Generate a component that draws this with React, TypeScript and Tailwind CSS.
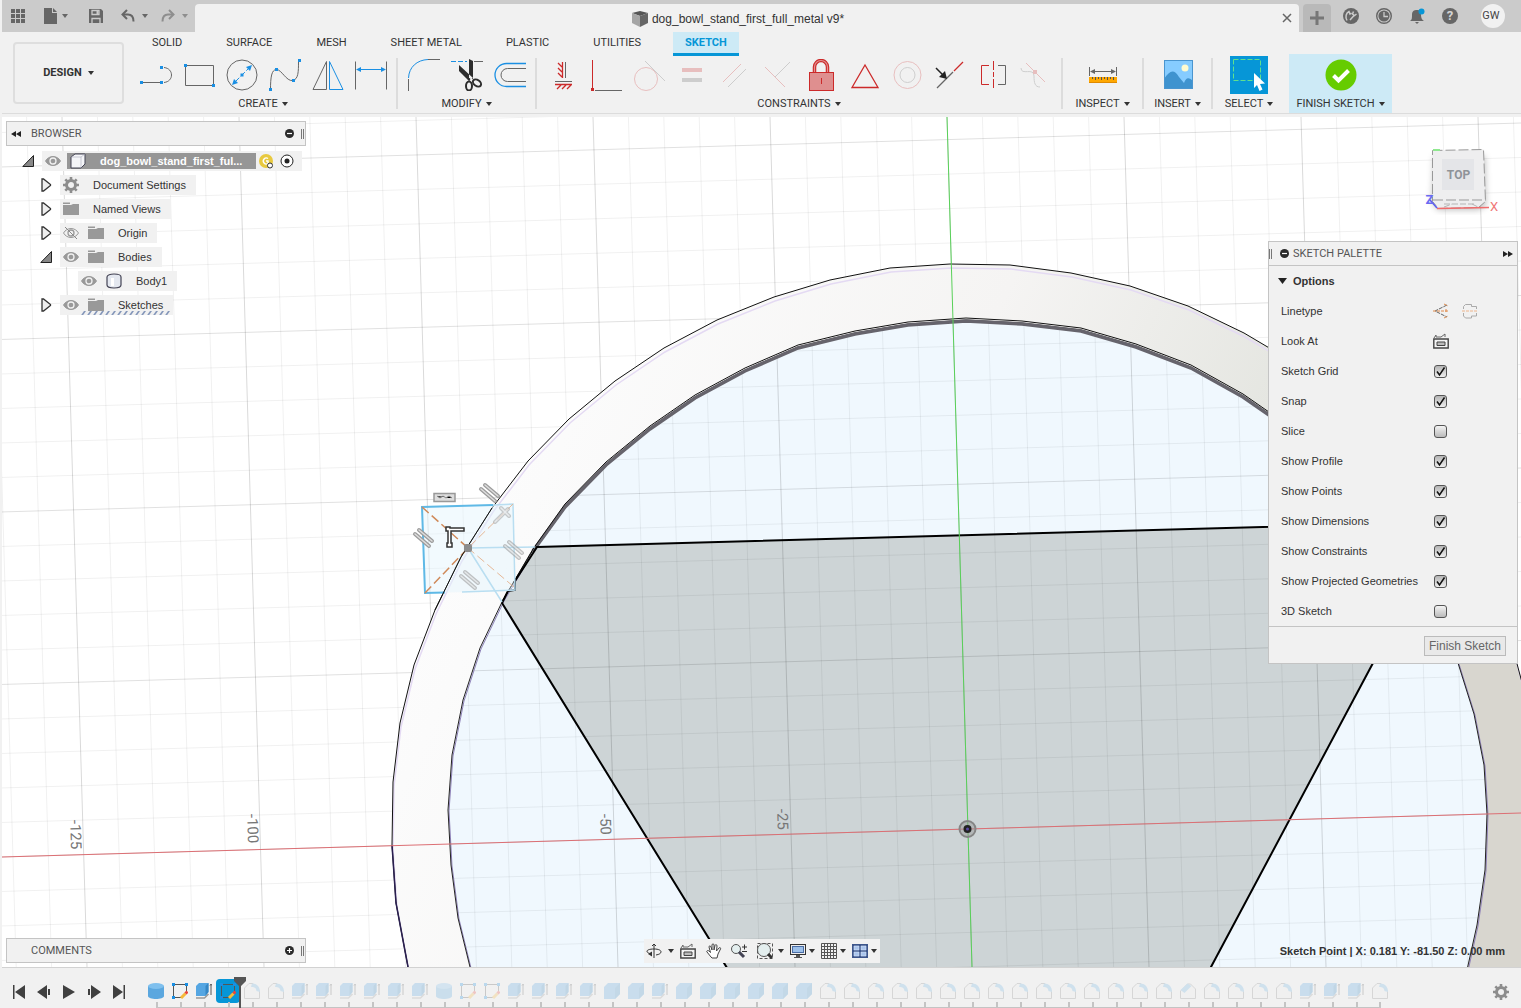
import React, { useState } from "react";

type Kids = { children?: React.ReactNode };

const GRAY = "#666666";
const BLUE = "#1a8fe3";
const RED = "#cc2a2a";

function Icon({ children, size = "w-8 h-8", box = "0 0 32 32" }: Kids & { size?: string; box?: string }) {
  return (
    <svg className={`${size} shrink-0`} viewBox={box} fill="none" aria-hidden="true">
      {children}
    </svg>
  );
}

function Caret({ color = "text-[#333]" }: { color?: string }) {
  return (
    <svg className={`h-1 w-1.5 shrink-0 ${color}`} viewBox="0 0 6 4" aria-hidden="true">
      <path d="M0 0h6L3 4z" fill="currentColor" />
    </svg>
  );
}

function Dot({ x, y }: { x: number; y: number }) {
  return <rect x={x - 1.5} y={y - 1.5} width="3" height="3" fill={BLUE} />;
}

/* ---------- ribbon icons ---------- */

const createIcons: [string, React.ReactNode][] = [
  ["Line", <><path d="M2 23.500H22M24 23.500c10-1 10-14 0-15" stroke={GRAY} /><Dot x={1.5} y={23.5} /><Dot x={21.5} y={23.5} /><Dot x={21.5} y={8.5} /></>],
  ["Rectangle", <><path d="M2.500 6.500h28v20h-28z" stroke={GRAY} /><Dot x={2.5} y={6.5} /><Dot x={30.5} y={26.5} /></>],
  ["Circle", <><circle cx="16" cy="16" r="15" stroke={GRAY} /><path d="M9 23l14-14" stroke={BLUE} strokeDasharray="6 2" /><path d="M26 6l-2 6-4-4zM6 26l2-6 4 4z" fill={BLUE} /><Dot x={16} y={16} /></>],
  ["Spline", <><path d="M1.500 30.500c0-12 1-20 6-20s10 12 16 11c6-1 6-9 6-19" stroke={GRAY} /><Dot x={1.5} y={30.5} /><Dot x={7.5} y={10.5} /><Dot x={24.5} y={21.5} /><Dot x={30.5} y={1.5} /></>],
  ["Mirror", <><path d="M14.500 2.500v28H1z" stroke={GRAY} /><path d="M17.500 2.500v28H31z" stroke={BLUE} /></>],
  ["Sketch Dimension", <><path d="M.5 2.500v28M31.500 2.500v28" stroke={GRAY} /><path d="M3 10.500h26" stroke={BLUE} /><path d="M1 10.500l5-2.500v5zM31 10.500l-5-2.500v5z" fill={BLUE} /></>],
];

const modifyIcons: [string, React.ReactNode][] = [
  ["Fillet", <><path d="M.5 19C1 8 9 1 20 .5" stroke={BLUE} /><path d="M20 .5h12M.5 20v12" stroke={GRAY} /></>],
  ["Trim", <><path d="M0 2.500h16" stroke={BLUE} strokeDasharray="5 2" /><path d="M23 2.500h9" stroke={GRAY} /><path d="M8 6v6l10 10 4-3zM18 0l4 2v18l-4-1z" fill="#2d2d2d" /><ellipse cx="18" cy="27" rx="3" ry="4.500" stroke="#2d2d2d" strokeWidth="2" /><ellipse cx="26" cy="24" rx="4.500" ry="3" transform="rotate(35 26 24)" stroke="#2d2d2d" strokeWidth="2" /><circle cx="20" cy="20" r="1" fill="#fff" /></>],
  ["Offset", <><path d="M32 4.500H12.500a11.500 11.500 0 000 23H32" stroke={BLUE} strokeWidth="1.300" /><path d="M32 9.500H13.500a6.500 6.500 0 000 13H32" stroke={GRAY} /></>],
];

const constraintIcons: [string, React.ReactNode, boolean][] = [
  ["Horizontal/Vertical", <><path d="M15.500 3v16M8 25.500h17M11 4l4 4M11 9l4 4M11 14l4 4M14 26l-4 4M19 26l-4 4M24 26l-4 4" stroke={RED} strokeWidth="1.300" /><path d="M18.500 3v16M8 22.500h17" stroke={GRAY} /></>, true],
  ["Coincident", <><path d="M2.500 1v28" stroke={RED} /><path d="M5 31.500h27" stroke={GRAY} /><rect x="1" y="29" width="3" height="3" fill={RED} /></>, true],
  ["Tangent", <><circle cx="13" cy="20" r="11.500" stroke={RED} /><path d="M12 2l20 20" stroke={GRAY} /></>, false],
  ["Equal", <><path d="M6 11h20" stroke={RED} strokeWidth="4" /><path d="M6 21h20" stroke={GRAY} strokeWidth="4" /></>, false],
  ["Parallel", <><path d="M4 23L22 5" stroke={RED} /><path d="M9 28l18-18" stroke={GRAY} /></>, false],
  ["Perpendicular", <><path d="M3 8l20 20" stroke={RED} /><path d="M13 18L28 3" stroke={GRAY} /></>, false],
  ["Fix/Unfix", <><path d="M9.500 14V8a6.500 6.500 0 0113 0v6" stroke={RED} strokeWidth="3.500" /><path d="M9.500 14V8a6.500 6.500 0 0113 0v6" stroke="#e29292" strokeWidth="1.200" /><rect x="4.500" y="13.500" width="24" height="18" fill="#df8f8f" stroke={RED} /><path d="M16.500 19v6" stroke={RED} /></>, true],
  ["MidPoint", <path d="M17 6L30 28.500H4z" stroke={RED} strokeWidth="1.300" />, true],
  ["Concentric", <><circle cx="16.500" cy="16" r="13.500" stroke={RED} /><circle cx="16.500" cy="16" r="7.500" stroke={GRAY} /></>, false],
  ["Collinear", <><path d="M3 29l16-16" stroke={GRAY} strokeWidth="1.300" /><path d="M20 12l9-9" stroke={RED} strokeWidth="1.300" /><path d="M2 9l7 7" stroke="#222" strokeWidth="1.500" /><path d="M13 20l-2-8-6 6z" fill="#222" /></>, true],
  ["Symmetry", <><path d="M12 6.500H4.500v19H12M16.500 2v9M16.500 13v5M16.500 20v9" stroke={RED} /><path d="M21 6.500h7.500v19H21" stroke={GRAY} /></>, true],
  ["Curvature", <><path d="M6 4l19 19" stroke={RED} /><path d="M1 9c0 8 13-1 13 8 0 7 1 11 6 11" stroke={GRAY} /><rect x="13" y="11" width="4" height="4" fill={RED} /></>, false],
];

function ToolLabel({ text }: { text: string }) {
  return (
    <button className="mt-[3px] flex h-4 items-center justify-center gap-1 whitespace-nowrap">
      {text}
      <Caret />
    </button>
  );
}

function Group({ label, children }: Kids & { label: string }) {
  return (
    <section className="flex flex-col items-center pt-px">
      <div className="flex h-9 items-center">{children}</div>
      <ToolLabel text={label} />
    </section>
  );
}

function Tool({ name, faded, children }: Kids & { name: string; faded?: boolean }) {
  return (
    <button aria-label={name} className={`flex w-[43px] justify-center ${faded ? "opacity-25" : ""}`}>
      <Icon>{children}</Icon>
    </button>
  );
}

function Divider() {
  return <div className="mx-1 mt-0.5 mb-1 w-0.5 shrink-0 bg-[#dcdcdc]" />;
}

function Ribbon() {
  const tabs = ["SOLID", "SURFACE", "MESH", "SHEET METAL", "PLASTIC", "UTILITIES", "SKETCH"];
  return (
    <div className="flex border-b border-[#dcdcdc] bg-[#f1f1f1] text-[11px] text-[#333]">
      <div className="ml-[11px] w-[121px] shrink-0 pt-2.5 pb-[9px]">
        <button className="flex h-[62px] w-[111px] items-center justify-center gap-1.5 rounded border-2 border-[#dedede] font-bold">
          DESIGN
          <Caret />
        </button>
      </div>
      <div className="flex flex-col">
        <nav className="ml-1.5 flex h-6 gap-5">
          {tabs.map((t) => (
            <button
              key={t}
              className={
                t === "SKETCH"
                  ? "border-b-[3px] border-[#0696d7] bg-[#cdeaf6] px-3 pt-0.5 font-bold whitespace-nowrap text-[#0696d7]"
                  : "border-b-[3px] border-transparent px-3 pt-0.5 whitespace-nowrap"
              }
            >
              {t}
            </button>
          ))}
        </nav>
        <div className="flex h-[57px]">
          <Group label="CREATE">
            {createIcons.map(([n, art]) => <Tool key={n} name={n}>{art}</Tool>)}
          </Group>
          <Divider />
          <Group label="MODIFY">
            {modifyIcons.map(([n, art]) => <Tool key={n} name={n}>{art}</Tool>)}
          </Group>
          <Divider />
          <Group label="CONSTRAINTS">
            {constraintIcons.map(([n, art, on]) => <Tool key={n} name={n} faded={!on}>{art}</Tool>)}
          </Group>
          <Divider />
          <div className="w-[71px]">
            <Group label="INSPECT">
              <Icon>
                <path d="M2.500 8v9M29.500 8v9M4 12.500h24" stroke={GRAY} />
                <path d="M3 12.500l5-2.500v5zM29 12.500l-5-2.500v5z" fill={GRAY} />
                <rect x="2" y="18" width="28" height="6" fill="#ffa800" />
                <path d="M5.500 18v2M8.500 18v3M11.500 18v2M14.500 18v3M17.500 18v2M20.500 18v3M23.500 18v2M26.500 18v3" stroke="#555" />
                <path d="M2 23.500h28" stroke="#e08a00" />
              </Icon>
            </Group>
          </div>
          <Divider />
          <div className="w-[59px]">
            <Group label="INSERT">
              <Icon>
                <rect x="2" y="1" width="29" height="29" fill="#86ccff" />
                <path d="M2 20C8 11 12 10 17 18l5 6c2-6 5-6 9-2v8H2z" fill="#3f93cf" />
                <circle cx="23" cy="9" r="3.500" fill="#fffbd0" />
                <rect x="2.500" y="1.500" width="28" height="28" stroke="#4a95cf" />
              </Icon>
            </Group>
          </div>
          <Divider />
          <div className="w-16">
            <Group label="SELECT">
              <Icon size="w-[38px] h-[38px]" box="0 0 38 38">
                <path d="M0 0h38v38H0z" fill="#0696d7" />
                <path d="M3.500 3.500h27v21h-27z" stroke="#5fe08f" strokeDasharray="5 2" />
                <path d="M24 17v15l3-3 2.500 6 3-1.500-2.500-5.500 5-.500z" fill="#fff" />
              </Icon>
            </Group>
          </div>
          <div className="-mt-0.5 ml-2 w-[103px] bg-[#cdeaf6] pt-0.5">
            <Group label="FINISH SKETCH">
              <Icon>
                <circle cx="16" cy="16" r="15.500" fill="#66cc00" />
                <path d="M8.500 16.500l5 5 10-10" stroke="#fff" strokeWidth="4" />
              </Icon>
            </Group>
          </div>
        </div>
      </div>
    </div>
  );
}

/* ---------- title bar ---------- */

function TitleBar() {
  return (
    <header className="flex h-8 bg-[#cbcbcb] text-[#666]">
      <div className="flex w-[193px] items-center pl-2">
        <button aria-label="Data panel">
          <Icon size="w-4 h-4" box="0 0 16 16">
            <path d="M1 1h4v4H1zM6 1h4v4H6zM11 1h4v4h-4zM1 6h4v4H1zM6 6h4v4H6zM11 6h4v4h-4zM1 11h4v4H1zM6 11h4v4H6zM11 11h4v4h-4z" fill="#666" />
          </Icon>
        </button>
        <button aria-label="File" className="ml-4 flex items-center gap-1">
          <Icon size="w-4 h-4" box="0 0 16 16"><path d="M2 0h8v5h5v11H2zM11 0l4 4h-4z" fill="#666" /></Icon>
          <Caret color="text-[#666]" />
        </button>
        <button aria-label="Save" className="ml-5">
          <Icon size="w-4 h-4" box="0 0 16 16">
            <path d="M1 1h12l2 2v12H1z" fill="#666" />
            <path d="M4 2.500h7v4H4zM4 15v-4.500h8V15" stroke="#cbcbcb" strokeWidth="1.300" />
            <path d="M8.500 3h2v3h-2z" fill="#cbcbcb" />
          </Icon>
        </button>
        <button aria-label="Undo" className="ml-4 flex items-center gap-1.5">
          <Icon size="w-4 h-4" box="0 0 16 16"><path d="M3 6.500h5c4 0 5.500 3 5.500 7" stroke="#666" strokeWidth="2" /><path d="M7 2L2.500 6.500 7 11" stroke="#666" strokeWidth="2" /></Icon>
          <Caret color="text-[#666]" />
        </button>
        <button aria-label="Redo" className="ml-3 flex items-center gap-1.5 opacity-60">
          <Icon size="w-4 h-4" box="0 0 16 16"><path d="M13 6.500H8c-4 0-5.500 3-5.500 7" stroke="#666" strokeWidth="2" /><path d="M9 2l4.500 4.500L9 11" stroke="#666" strokeWidth="2" /></Icon>
          <Caret color="text-[#666]" />
        </button>
      </div>
      <div className="mt-1 flex flex-1 items-center rounded-t bg-[#f1f1f1] pr-1.5">
        <h1 className="flex flex-1 items-center justify-center gap-1 pt-0.5 font-['Liberation_Sans',sans-serif] text-[12px] text-[#333]">
          <Icon size="w-4 h-4" box="0 0 16 16">
            <path d="M0 2l8-2 8 2-8 3z" fill="#555" /><path d="M0 2l8 3v11l-8-4z" fill="#a5a5a5" /><path d="M16 2L8 5v11l8-4z" fill="#666" />
          </Icon>
          dog_bowl_stand_first_full_metal v9*
        </h1>
        <button aria-label="Close tab">
          <Icon size="w-3 h-3" box="0 0 12 12"><path d="M2 2l8 8M10 2l-8 8" stroke="#666" strokeWidth="1.500" /></Icon>
        </button>
      </div>
      <div className="flex w-[222px] items-center pl-1">
        <button aria-label="New tab" className="mt-1 flex h-7 w-7 items-center justify-center rounded-t bg-[#b9b9b9]">
          <Icon size="w-3.5 h-3.5" box="0 0 14 14"><path d="M7 0v14M0 7h14" stroke="#777" strokeWidth="3" /></Icon>
        </button>
        <div className="ml-3 flex items-center gap-[17px]">
          <button aria-label="Extensions">
            <Icon size="w-4 h-4" box="0 0 16 16">
              <circle cx="8" cy="8" r="8" fill="#666" />
              <path d="M4 12.500C2 9 3 5 6 3.500L7 6l1.500-1M7 12l4.500-5M10.500 3.500l-1 2.500 2 1.500 2-1.500" stroke="#cbcbcb" strokeWidth="1.500" />
            </Icon>
          </button>
          <button aria-label="Job status">
            <Icon size="w-4 h-4" box="0 0 16 16"><circle cx="8" cy="8" r="7.300" stroke="#666" strokeWidth="1.400" /><circle cx="8" cy="8" r="5.600" fill="#666" /><path d="M8 4v4.500h4" stroke="#cbcbcb" strokeWidth="1.300" /></Icon>
          </button>
          <button aria-label="Notifications">
            <Icon size="w-4 h-4" box="0 0 16 16"><path d="M1 13c2-1 2-3 2-6 0-4 2-5 5-5s4 2 4 5 1 5 3 6zM6 14h4l-2 2z" fill="#666" /><circle cx="12.500" cy="3.500" r="3" fill="#0696d7" /></Icon>
          </button>
          <button aria-label="Help" className="flex h-4 w-4 items-center justify-center rounded-full bg-[#666] text-[13px] leading-4 font-bold text-[#d4d4d4]">?</button>
        </div>
        <button className="ml-[23px] flex h-6 w-6 items-center justify-center rounded-full bg-[#f1f1f1] pr-1 text-[11px] text-[#444]">GW</button>
      </div>
    </header>
  );
}

/* ---------- canvas drawing ---------- */

const OUTER =
  "950,264 1010,265 1071,273 1130,286 1188,306 1244,333 1298,365 1347,403 1392,446 1431,494 1465,546 1493,602 1516,660 1532,720 1541,782 1544,845 1540,907 1530,970 1520,1010 420,1010 408,967 396,903 392,845 393,782 400,723 414,665 435,610 461,557 492,508 528,461 569,419 615,381 664,348 717,320 774,297 830,280 890,268";
const INNER =
  "966,320 1022,323 1081,330 1136,346 1191,367 1243,396 1292,430 1336,469 1375,513 1410,561 1439,611 1458,663 1474,714 1484,765 1487,814 1485,870 1477,925 1467,970 1457,1010 485,1010 470,967 458,918 451,865 448,810 452,755 463,700 480,648 503,600 533,550 565,506 606,464 650,428 695,397 745,370 798,347 855,333 908,324";
const BODY = "537,547 1440,522 1373,663 1211,967 1190,1010 753,1010 502,603 508,591 515,590 515,581";

/* Two short bars, the glyph that marks a parallel pair. */
function ParallelMark({ x, y, faint }: { x: number; y: number; faint?: boolean }) {
  const d = "M-8 -4L6 8M-4 -8L9 3";
  return (
    <g transform={`translate(${x} ${y})`} strokeLinecap="round" opacity={faint ? 0.6 : 1}>
      <path d={d} stroke="#9c9c9c" strokeWidth="4" />
      <path d={d} stroke="#dedede" strokeWidth="1.500" />
    </g>
  );
}

function CanvasArt() {
  const cols = Array.from({ length: 49 }, (_, i) => i - 30);
  const rows = Array.from({ length: 30 }, (_, i) => i - 23);
  return (
    <svg className="absolute inset-0 h-full w-full" viewBox="2 117 1519 850" preserveAspectRatio="xMidYMid slice" aria-hidden="true">
      <defs>
        <linearGradient id="ring" x1="0" y1="0" x2="1" y2="0.3">
          <stop offset="0" stopColor="#ffffff" />
          <stop offset="0.2" stopColor="#fbfbfb" />
          <stop offset="0.5" stopColor="#f5f4f3" />
          <stop offset="0.75" stopColor="#e5e6e1" />
          <stop offset="1" stopColor="#d8d6cf" />
        </linearGradient>
        <clipPath id="ringClip">
          <polygon points={OUTER} />
        </clipPath>
      </defs>
      <rect width="1521" height="1008" fill="#fff" />
      <polygon points={INNER} fill="#f0f8fe" />
      <polygon points={BODY} fill="#cdd4d6" />
      {cols.map((k) => (
        <path key={k} d={`M${947 + 35.4 * k} 117L${972 + 35.4 * k} 967`} stroke="#000" strokeOpacity={k % 5 === 0 ? 0.15 : 0.06} />
      ))}
      {rows.map((k) => (
        <path key={k} d={`M0 ${857 + 34.5 * k}L1521 ${813 + 34.5 * k}`} stroke="#000" strokeOpacity={k % 5 === 0 ? 0.12 : 0.06} />
      ))}
      <path d={`M${OUTER.replace(/ /g, "L")}ZM${INNER.replace(/ /g, "L")}Z`} fill="url(#ring)" fillRule="evenodd" />
      <g clipPath="url(#ringClip)">
        <polygon points={OUTER} fill="none" stroke="#e4daf3" strokeWidth="1.500" transform="translate(1 4)" />
      </g>
      <polygon points={OUTER} fill="none" stroke="#111" />
      <path d="M392 845L396 903 408 967" fill="none" stroke="#2a2050" strokeWidth="1.500" />
      <polygon points={INNER} fill="none" stroke="#8f82b8" transform="translate(1 1)" />
      <polygon points={INNER} fill="none" stroke="#222" />
      <path
        d="M533 550L565 506 606 464 650 428 695 397 745 370 798 347 855 333 908 324 966 320 1022 323 1081 330 1136 346 1191 367 1243 396 1292 430"
        stroke="#66646c"
        strokeWidth="3.500"
        fill="none"
        transform="translate(0 1)"
      />
      <path d="M503 600L533 549 565 504 606 462 650 426 695 395 745 368 798 345 855 331 908 322 966 318 1022 321 1081 328 1136 344 1191 365 1243 394 1292 428" stroke="#111" fill="none" />
      <polygon points={BODY} fill="none" stroke="#000" strokeWidth="2" />
      <path d="M2 857L1521 813" stroke="#dc6f74" />
      <path d="M947 117L972 967" stroke="#58d058" />
      <circle cx="967.500" cy="829" r="8" fill="#9a9a9a" fillOpacity="0.5" stroke="#858585" strokeWidth="2" />
      <circle cx="967.500" cy="829" r="4" fill="#222" />
      <circle cx="967.500" cy="829" r="1.500" fill="#5a49a5" />

      <polygon points="422,507 513,504 514,591 425,593" fill="#e2f3fd" fillOpacity="0.45" />
      <path d="M493 505l20-1 2 86-53 2" stroke="#b9def1" strokeWidth="1.500" fill="none" />
      <path d="M468 548l67-1M468 548l34 54" stroke="#b9def1" strokeWidth="1.500" />
      <path d="M493 505l-71 2 3 86 20-.500" stroke="#5fb9e6" strokeWidth="2" fill="none" />
      <path d="M422 507l46 41M425 593l43-45" stroke="#d08a5a" strokeWidth="1.500" strokeDasharray="9 4" />
      <path d="M513 504l-45 44M514 587l-46-39" stroke="#e6b897" strokeDasharray="9 4" />
      <path d="M435 610l26-53 31-49" stroke="#111" fill="none" />
      <rect x="464" y="544" width="8" height="8" rx="2" fill="#8c8c8c" />
      <ParallelMark x={489} y={493} />
      <ParallelMark x={423} y={538} />
      <ParallelMark x={469} y={580} faint />
      <ParallelMark x={513} y={550} faint />
      <path d="M434 501.500h21v-8h-21z" fill="#ddd" stroke="#999" strokeWidth="1.500" />
      <path d="M437 496l3 2 3-2 3 2 3-2 3 2" stroke="#888" />
      <g strokeLinecap="round" opacity="0.6">
        <path d="M495 522l13-13M501 508l8 8" stroke="#aaa" strokeWidth="4" />
        <path d="M495 522l13-13M501 508l8 8" stroke="#e4e4e4" strokeWidth="1.500" />
      </g>
      <path d="M446 527h4v1h14v3h-13v12h1v4h-5v-4h1v-12h-2z" fill="#fff" stroke="#333" strokeWidth="1.500" />
      <g fill="#777" fontFamily="Roboto, sans-serif" fontSize="15">
        <text transform="translate(70 820) rotate(88)">-125</text>
        <text transform="translate(247 814) rotate(88)">-100</text>
        <text transform="translate(600 814) rotate(88)">-50</text>
        <text transform="translate(777 809) rotate(88)">-25</text>
      </g>
    </svg>
  );
}

function ViewCube() {
  return (
    <svg className="absolute top-7 right-[21px] h-[70px] w-[76px]" viewBox="1424 145 76 70" role="img" aria-label="View cube">
      <defs>
        <filter id="soft" x="-30%" y="-30%" width="160%" height="160%">
          <feGaussianBlur stdDeviation="3" />
        </filter>
      </defs>
      <path d="M1434 156h51l1 50-8 4h-40l-6-8z" fill="#000" fillOpacity="0.25" filter="url(#soft)" />
      <path d="M1432.500 150.500l51-1 2 52-7 6-40 1-6-7z" fill="#eeeeef" />
      <path d="M1432.500 150.500l51-1 2 52-7 6-40 1-6-7zM1433 200h53" fill="none" stroke="#999" strokeDasharray="10 3" />
      <path d="M1442 159h32v31h-32z" fill="#e4e5e8" />
      <path d="M1444 204h32M1444 207l8-3M1472 204l6 3" fill="none" stroke="#b5b5b5" strokeDasharray="6 2" />
      <path d="M1437 208.500l52-1" stroke="#f06c6c" strokeWidth="1.500" />
      <path d="M1437 208l-7-8" stroke="#5a5af0" strokeWidth="1.500" />
      <path d="M1433 150h7" stroke="#8fe88f" strokeWidth="2" />
      <g fontFamily="Roboto, sans-serif" fontWeight="bold">
        <text x="1458.500" y="179" fontSize="12" textAnchor="middle" fill="#8f9398">TOP</text>
        <text x="1490" y="211" fontSize="13" fontWeight="normal" fill="#f07777">X</text>
        <text x="1425.500" y="204" fontSize="13" fill="#6a6af2">Z</text>
      </g>
    </svg>
  );
}

/* ---------- browser tree ---------- */

function Eye({ off }: { off?: boolean }) {
  return (
    <Icon size="w-4 h-4" box="0 0 16 16">
      <path d="M.5 8C4 2 12 2 15.500 8 12 14 4 14 .5 8z" fill={off ? "none" : "#999"} stroke="#999" />
      <circle cx="8" cy="8" r="3" stroke={off ? "#999" : "#f1f1f1"} strokeWidth="1.300" />
      {off && <path d="M2 2l12 12" stroke="#888" />}
    </Icon>
  );
}

function Folder() {
  return (
    <Icon size="w-4 h-4" box="0 0 16 16">
      <path d="M0 4h8l2-1h6v11H0zM0 1.500h7v1.500H0z" fill="#999" />
    </Icon>
  );
}

function Gear() {
  return (
    <Icon size="w-4 h-4" box="0 0 16 16">
      <circle cx="8" cy="8" r="4.500" stroke="#8d8d8d" strokeWidth="3" />
      <path d="M8 0v3M8 13v3M0 8h3M13 8h3M2.300 2.300l2 2M11.700 11.700l2 2M2.300 13.700l2-2M11.700 4.300l2-2" stroke="#8d8d8d" strokeWidth="2.600" />
    </Icon>
  );
}

function Twist({ open }: { open?: boolean }) {
  return (
    <button aria-label={open ? "Collapse" : "Expand"} className="mr-2 flex w-3 shrink-0 justify-center">
      <Icon size="w-3 h-3.5" box="0 0 12 14">
        {open ? <path d="M11.500 1.500v11H.8z" fill="#888" stroke="#222" /> : <path d="M2 1v12h1.500L10.500 7.500v-1L3.500 1z" fill="#eee" stroke="#333" strokeWidth="1.300" />}
      </Icon>
    </button>
  );
}

function Node({ indent, twist, icons, label, hatch }: { indent: string; twist?: "open" | "closed"; icons: React.ReactNode; label: string; hatch?: boolean }) {
  return (
    <li className={`flex h-6 items-center ${indent}`}>
      {twist && <Twist open={twist === "open"} />}
      <div className="relative flex h-5 items-center gap-[9px] bg-[#f1f1f1] pr-2.5 pl-[3px]">
        {icons}
        <span className="ml-[5px]">{label}</span>
        {hatch && (
          <svg className="absolute right-0.5 bottom-0 h-1 w-[90px]" viewBox="0 0 90 4" aria-hidden="true">
            <path d="M0 2h90" stroke="#8597ba" strokeWidth="4" strokeDasharray="2 4" transform="skewX(-35) translate(3 0)" />
          </svg>
        )}
      </div>
    </li>
  );
}

function RoundSign({ plus }: { plus?: boolean }) {
  return (
    <Icon size="w-[9px] h-[9px]" box="0 0 9 9">
      <circle cx="4.500" cy="4.500" r="4.500" fill="#2b2b2b" />
      <path d={plus ? "M2 4.500h5M4.500 2v5" : "M2 4.500h5"} stroke="#fff" strokeWidth="1.200" />
    </Icon>
  );
}

function Grip() {
  return <div className="h-2.5 w-[3px] border-x border-[#777]" />;
}

function Browser() {
  return (
    <aside className="absolute top-1 left-1 w-[300px] text-[11px] text-[#333]">
      <div className="flex h-[25px] items-center border border-[#c4c4c4] bg-[#f1f1f1] pr-px pl-1 font-[Roboto,sans-serif] text-[#555]">
        <button aria-label="Collapse browser">
          <Icon size="w-2.5 h-2" box="0 0 10 8"><path d="M5 1v6L0 4zM10 1v6L5 4z" fill="#222" /></Icon>
        </button>
        <h2 className="ml-2.5 flex-1 pt-px">BROWSER</h2>
        <button aria-label="Minimize browser" className="mr-[7px]"><RoundSign /></button>
        <Grip />
      </div>
      <ul className="mt-[3px]">
        <li className="flex h-6 items-center pl-4">
          <Twist open />
          <div className="flex h-5 w-[260px] items-center bg-[#f1f1f1] pl-[3px]">
            <Eye />
            <div className="ml-1.5 flex h-4 w-[189px] items-center bg-[#969696] pl-[3px] font-bold text-white">
              <Icon size="w-4 h-4" box="0 0 16 16"><path d="M1 4l4-3h10v10l-4 4H1z" fill="#f4f5f8" stroke="#445" /><path d="M1 4h10v11M11 4l4-3" stroke="#aab" strokeWidth=".6" /></Icon>
              <span className="ml-3.5 whitespace-nowrap">dog_bowl_stand_first_ful...</span>
            </div>
            <Icon size="w-4 h-4 ml-0.5" box="0 0 16 16"><circle cx="8" cy="8" r="7" fill="#e8c93f" /><path d="M10 5.500a3 3 0 100 5V8H8" stroke="#fff" strokeWidth="1.400" /><circle cx="12" cy="12.500" r="2.500" fill="#fff" stroke="#333" /></Icon>
            <Icon size="w-3.5 h-3.5 ml-1.5" box="0 0 14 14"><circle cx="7" cy="7" r="6" fill="#fff" stroke="#222" /><circle cx="7" cy="7" r="2.500" fill="#222" /></Icon>
          </div>
        </li>
        <Node indent="pl-[34px]" twist="closed" icons={<Gear />} label="Document Settings" />
        <Node indent="pl-[34px]" twist="closed" icons={<Folder />} label="Named Views" />
        <Node indent="pl-[34px]" twist="closed" icons={<><Eye off /><Folder /></>} label="Origin" />
        <Node indent="pl-[34px]" twist="open" icons={<><Eye /><Folder /></>} label="Bodies" />
        <Node
          indent="pl-[72px]"
          icons={<><Eye /><Icon size="w-4 h-4" box="0 0 16 16"><path d="M1 4c0-4 14-4 14 0v8c0 4-14 4-14 0z" fill="#e4e8f0" stroke="#445" strokeWidth="1.200" /><path d="M5 5h3v8H5z" fill="#fff" /></Icon></>}
          label="Body1"
        />
        <Node indent="pl-[34px]" twist="closed" icons={<><Eye /><Folder /></>} label="Sketches" hatch />
      </ul>
    </aside>
  );
}

/* ---------- sketch palette ---------- */

function LookAtIcon({ size }: { size: string }) {
  return (
    <Icon size={size} box="0 0 16 16">
      <path d="M.8 6h14.400v9H.8z" fill="#f5f5f5" stroke="#444" strokeWidth="1.400" />
      <path d="M4 9h8v3.500H4z" fill="#bbb" stroke="#444" />
      <path d="M1 5l2-3v2h5l4-3v3" stroke="#666" />
    </Icon>
  );
}

function PaletteCheck({ label, initial }: { label: string; initial: boolean }) {
  const [on, setOn] = useState(initial);
  return (
    <label className="flex h-[30px] items-center">
      <span className="w-[153px] whitespace-nowrap">{label}</span>
      <span className="grid h-[13px] w-[13px]">
        <input
          type="checkbox"
          checked={on}
          onChange={() => setOn(!on)}
          className="col-start-1 row-start-1 h-[13px] w-[13px] appearance-none rounded-[3px] border border-[#555] bg-linear-to-b from-[#f4f4f4] to-[#bbb] checked:from-[#b5b5b5] checked:to-[#eee]"
        />
        {on && (
          <svg className="pointer-events-none col-start-1 row-start-1 h-[13px] w-[13px]" viewBox="0 0 13 13" fill="none" aria-hidden="true">
            <path d="M3 6.500l2.500 3.500L10.500 2.500" stroke="#111" strokeWidth="1.500" />
          </svg>
        )}
      </span>
    </label>
  );
}

function Palette() {
  const checks: [string, boolean][] = [
    ["Sketch Grid", true],
    ["Snap", true],
    ["Slice", false],
    ["Show Profile", true],
    ["Show Points", true],
    ["Show Dimensions", true],
    ["Show Constraints", true],
    ["Show Projected Geometries", true],
    ["3D Sketch", false],
  ];
  return (
    <aside className="absolute top-[124px] right-[3px] w-[250px] border border-[#c4c4c4] bg-[#f1f1f1] text-[11px] text-[#333]">
      <div className="flex h-6 items-center border-b border-[#c4c4c4] pr-1 font-[Roboto,sans-serif] text-[#555]">
        <Grip />
        <button aria-label="Minimize palette" className="ml-2"><RoundSign /></button>
        <h2 className="ml-1 flex-1 pt-px">SKETCH PALETTE</h2>
        <button aria-label="Dock palette">
          <Icon size="w-2.5 h-2" box="0 0 10 8"><path d="M0 1v6l5-3zM5 1v6l5-3z" fill="#222" /></Icon>
        </button>
      </div>
      <div className="pl-3">
        <button className="-ml-[3px] flex h-[30px] items-center gap-1.5 font-bold">
          <Icon size="w-[9px] h-1.5" box="0 0 9 6"><path d="M0 0h9L4.500 6z" fill="#222" /></Icon>
          Options
        </button>
        <div className="flex h-[30px] items-center">
          <span className="w-[152px]">Linetype</span>
          <button aria-label="Construction">
            <Icon size="w-4 h-4" box="0 0 16 16"><path d="M14 2L2 8l12 6" stroke="#666" strokeDasharray="4 1" /><path d="M0 8h16M13 6v4M11 1l4 2M11 15l4-2" stroke="#e08a4a" strokeDasharray="3 1" /></Icon>
          </button>
          <button aria-label="Centerline" className="ml-[13px]">
            <Icon size="w-4 h-4" box="0 0 16 16"><path d="M1.500 6V3.500l2-2h6v2h5V6M1.500 10v3l2 2h6v-2h5v-3" stroke="#aaa" /><path d="M0 8h16" stroke="#eeb58c" strokeDasharray="3 1" /></Icon>
          </button>
        </div>
        <div className="flex h-[30px] items-center">
          <span className="w-[152px]">Look At</span>
          <button aria-label="Look At"><LookAtIcon size="w-4 h-4" /></button>
        </div>
        {checks.map(([l, v]) => <PaletteCheck key={l} label={l} initial={v} />)}
      </div>
      <div className="flex justify-end border-t border-[#c4c4c4] pt-[9px] pb-[7px] pr-[11px]">
        <button className="h-5 border border-[#bbb] bg-[#e9e9e9] px-1 text-[12px] leading-4 text-[#666]">Finish Sketch</button>
      </div>
    </aside>
  );
}

/* ---------- bottom overlays ---------- */

function NavBar() {
  return (
    <div className="absolute bottom-1 left-1/2 flex h-6 w-[236px] -translate-x-1/2 items-center bg-[#f1f1f1] pl-0.5">
      <button aria-label="Orbit" className="flex items-center gap-1.5">
        <Icon size="w-4 h-4" box="0 0 16 16"><path d="M8 1v14M6 3l2-2 2 2M10 12c7-1 7-6-2-6S-1 10 6 11" stroke="#333" /><path d="M2 11l4-2.500v5z" fill="#333" /></Icon>
        <Caret />
      </button>
      <button aria-label="Look at" className="ml-1.5"><LookAtIcon size="w-4 h-4" /></button>
      <button aria-label="Pan" className="ml-2.5">
        <Icon size="w-4 h-4" box="0 0 16 16"><path d="M5 14L1 9c-1-1 1-2 2-1l1.500 1.500L3 4c0-1.500 1.500-1.500 2 0l1 3V2c0-1.500 2-1.500 2 0v5l1-4.500c.5-1.500 2-1 2 .5L10.500 8 13 5c1-1 2 0 1.500 1L12 11l-1 4H6z" fill="#fff" stroke="#444" /></Icon>
      </button>
      <button aria-label="Zoom" className="ml-2">
        <Icon size="w-[18px] h-4" box="0 0 18 16"><circle cx="6" cy="6" r="4.500" fill="#e4efef" stroke="#555" /><path d="M9 9l5 5" stroke="#445" strokeWidth="3" /><path d="M12 4h5M14.500 1.500v5M12 8.500h5" stroke="#333" /></Icon>
      </button>
      <button aria-label="Fit" className="ml-2 flex items-center gap-1">
        <Icon size="w-[18px] h-[18px]" box="0 0 18 18"><path d="M1.500 1.500h15v15h-15z" stroke="#555" strokeDasharray="3 2" /><circle cx="8" cy="8" r="6.500" fill="#e4efef" stroke="#555" /><path d="M12 12l4 4" stroke="#333" strokeWidth="3" /></Icon>
        <Caret />
      </button>
      <button aria-label="Display settings" className="ml-1.5 flex items-center gap-[3px]">
        <Icon size="w-4 h-4" box="0 0 16 16"><rect x=".5" y="1.500" width="15" height="10" fill="#eee" stroke="#333" /><rect x="2.500" y="3.500" width="11" height="6" fill="#9cc0ea" stroke="#4a6da5" /><path d="M6 12h4v2h2v1H4v-1h2z" fill="#555" /></Icon>
        <Caret />
      </button>
      <button aria-label="Grid settings" className="ml-1.5 flex items-center gap-[3px]">
        <Icon size="w-4 h-4" box="0 0 16 16"><path d="M.5.5h15v15H.5zM3.500.5v15M6.500.5v15M9.500.5v15M12.500.5v15M.5 3.500h15M.5 6.500h15M.5 9.500h15M.5 12.500h15" stroke="#555" /></Icon>
        <Caret />
      </button>
      <button aria-label="Viewports" className="ml-1.5 flex items-center gap-[3px]">
        <Icon size="w-4 h-4" box="0 0 16 16"><path d="M0 1h16v14H0z" fill="#3d568c" /><path d="M2 3h5v4H2zM9 3h5v4H9zM2 9h5v4H2zM9 9h5v4H9z" fill="#a9c4ec" stroke="#dce8fa" strokeWidth=".6" /></Icon>
        <Caret />
      </button>
    </div>
  );
}

type Feature = "cyl" | "sketch" | "extrude" | "fillet" | "chamfer" | "box";

const rep = (f: Feature, n: number): Feature[] => Array.from({ length: n }, () => f);

const features: Feature[] = [
  "cyl", "sketch", "extrude", "sketch",
  ...rep("fillet", 2), ...rep("extrude", 6), "cyl", ...rep("sketch", 2), ...rep("extrude", 4),
  ...rep("box", 2), "extrude", ...rep("box", 6), ...rep("fillet", 15), "chamfer", ...rep("fillet", 4),
  ...rep("extrude", 3), "fillet",
];

const featureArt: Record<Feature, React.ReactNode> = {
  cyl: <><path d="M0 3v10c0 4 16 4 16 0V3z" fill="#5ba7df" /><ellipse cx="8" cy="3" rx="8" ry="3" fill="#7fc0ee" /></>,
  sketch: <><path d="M3 1.500h10M3 14.500h6M1.500 3v10M14.500 3v6" stroke="#555" /><path d="M0 0h3v3H0zM13 0h3v3h-3zM0 13h3v3H0z" fill={BLUE} /><path d="M9 15l4.500-4.500" stroke="#f5b93a" strokeWidth="3" /><path d="M13.500 10.500l2-2" stroke="#e8453c" strokeWidth="3" /></>,
  extrude: <><path d="M0 3l3-3h9.500v9l-3 4H0z" fill="#55a6e2" /><path d="M9.500 3l3-3v9l-3 4z" fill="#3587c5" /><path d="M0 15h8.500l4-4" stroke="#999" strokeWidth="1.500" /><path d="M15 2v10M14 2.500L15 1l1 1.500" stroke="#444" strokeWidth=".9" /></>,
  fillet: <><path d="M.5 5l4.500-4.500h4l6.500 7V15.500H.5z" fill="#eee" stroke="#888" /><path d="M8 .5c5 0 8 3 8 8.500l-3.500-1C12 5 11 4 7 4z" fill="#6db3e4" /></>,
  chamfer: <><path d="M.5 8l7-7h3l5 5v9.500H.5z" fill="#eee" stroke="#888" /><path d="M.5 7l7-6.500 4 2.500-7 7z" fill="#6db3e4" /></>,
  box: <><path d="M0 4l4-4h12v11l-5 5H0z" fill="#55a6e2" /><path d="M11 5l5-5v11l-5 5z" fill="#3f90cc" /></>,
};

function Timeline() {
  const playback: [string, string][] = [
    ["Go to beginning", "M2 1h1.500v14H2zM14 1v14L4 8z"],
    ["Step back", "M11 1v14L1 8zM12 5h2v6h-2z"],
    ["Play", "M2 1v14l12-7z"],
    ["Step forward", "M5 1v14l10-7zM2 5h2v6H2z"],
    ["Go to end", "M2 1v14l10-7zM12.500 1H14v14h-1.500z"],
  ];
  return (
    <footer className="flex h-[41px] border-t border-[#d2d2d2] bg-[#f1f1f1]">
      <div className="flex h-12 w-[142px] shrink-0 items-center gap-[9px] pl-[9px]">
        {playback.map(([n, d]) => (
          <button key={n} aria-label={n}>
            <Icon size="w-4 h-4" box="0 0 16 16"><path d={d} fill="#404040" /></Icon>
          </button>
        ))}
      </div>
      <ol className="flex flex-1 overflow-hidden pt-[11px]">
        {features.map((f, i) => (
          <li key={i} className="relative w-6 shrink-0">
            <button aria-label={`${f} ${i + 1}`} className={`flex h-6 w-6 items-center justify-center ${i === 3 ? "rounded-sm bg-[#0696d7]" : ""}`}>
              <span className={i > 3 ? "opacity-25" : ""}>
                <Icon size="w-4 h-4" box="0 0 16 16">{featureArt[f]}</Icon>
              </span>
            </button>
            <div className={`h-[5px] border-b border-[#c4c4c4] ${i === 0 ? "ml-3" : ""} ${i === features.length - 1 ? "mr-[11px]" : ""}`} />
            <div className={`absolute bottom-0 h-1.5 w-0.5 bg-[#c4c4c4] ${i === features.length - 1 ? "right-[11px]" : "left-3"}`} />
            {i === 3 && (
              <svg className="absolute -top-0.5 left-[18px] z-10 h-8 w-3" viewBox="0 0 12 32" aria-hidden="true">
                <path d="M0 0h12v4L7 9v23H5V9L0 4z" fill="#555" />
              </svg>
            )}
          </li>
        ))}
      </ol>
      <button aria-label="Timeline settings" className="mr-3 flex h-12 items-center"><Gear /></button>
    </footer>
  );
}

export default function App() {
  return (
    <div className="flex h-screen flex-col overflow-hidden bg-[#f1f1f1] pl-0.5 font-[Roboto,sans-serif]">
      <TitleBar />
      <Ribbon />
      <main className="relative mt-[3px] flex-1 overflow-hidden font-['Liberation_Sans',sans-serif]">
        <CanvasArt />
        <ViewCube />
        <Browser />
        <Palette />
        <section className="absolute bottom-1 left-1 flex h-[25px] w-[300px] items-center border border-[#c4c4c4] bg-[#f1f1f1] pr-px pl-6 font-[Roboto,sans-serif] text-[11px] text-[#555]">
          <h2 className="flex-1 pt-px">COMMENTS</h2>
          <button aria-label="Add comment" className="mr-[7px]"><RoundSign plus /></button>
          <Grip />
        </section>
        <NavBar />
        <p className="absolute right-4 bottom-2 text-[11px] font-bold text-[#333]">Sketch Point | X: 0.181 Y: -81.50 Z: 0.00 mm</p>
      </main>
      <Timeline />
    </div>
  );
}
